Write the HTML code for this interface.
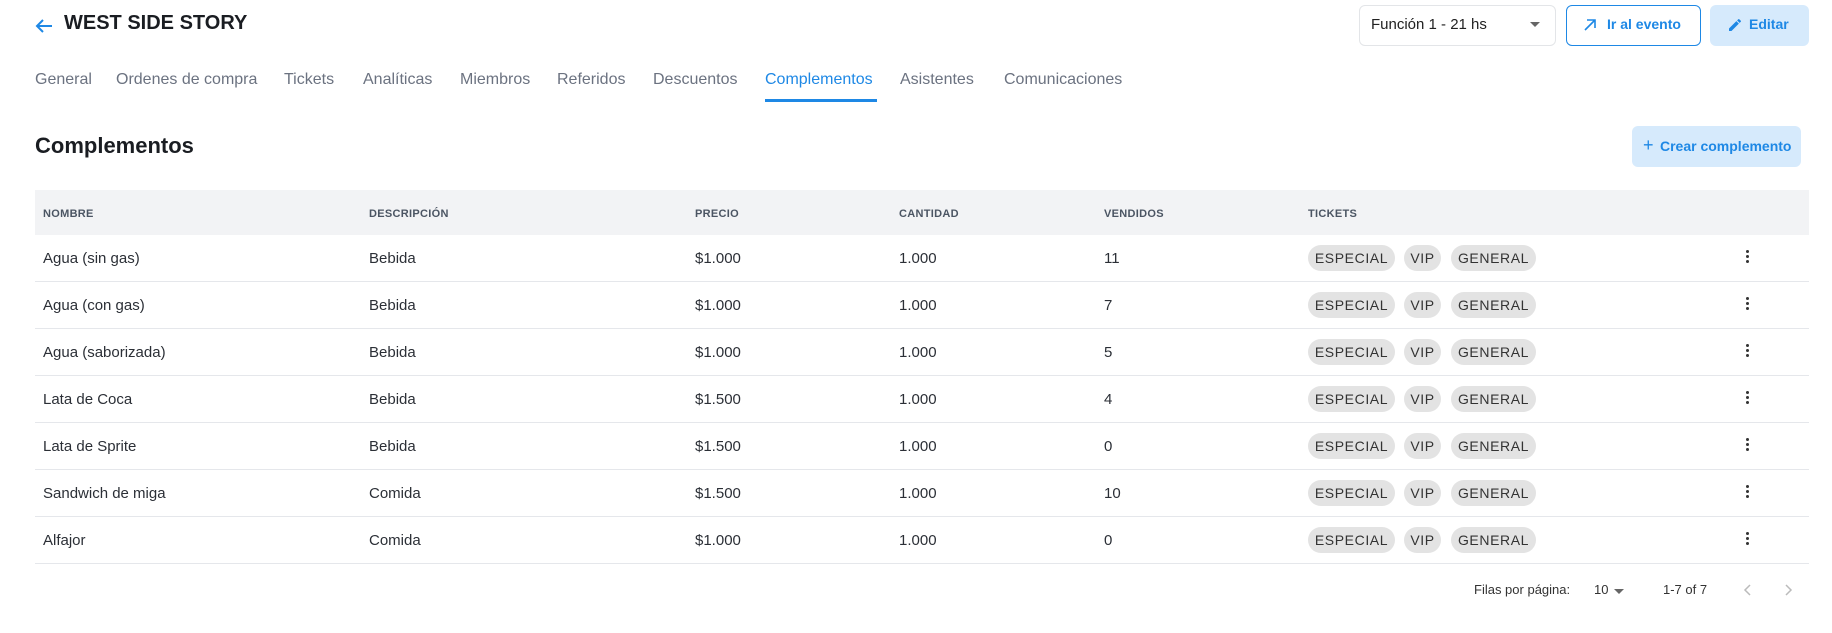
<!DOCTYPE html>
<html><head><meta charset="utf-8"><style>
*{box-sizing:border-box;margin:0;padding:0}
body{width:1832px;height:633px;background:#fff;font-family:"Liberation Sans",sans-serif;color:#1f2329;position:relative;overflow:hidden}
.a{position:absolute;white-space:nowrap}
.tab{position:absolute;top:71px;font-size:16px;color:#6b7280}
.th{position:absolute;top:208px;font-size:11px;font-weight:bold;color:#4b5563;letter-spacing:.3px}
.row{position:absolute;left:35px;width:1774px;height:47px;border-bottom:1px solid #e5e7eb;font-size:15px;color:#2b2f36}
.row span{position:absolute;top:15px}
.chip{position:absolute;top:10px;height:26px;border-radius:13px;background:#e3e3e3;font-size:14px;color:#333;text-align:center;line-height:26px;letter-spacing:.6px}
.dots{position:absolute;left:1711px;top:15px;width:4px}
.dots i{display:block;width:3px;height:3px;border-radius:50%;background:#333;margin-bottom:2px}
</style></head><body>
<svg class="a" style="left:34px;top:16px" width="20" height="20" viewBox="0 0 20 20"><path d="M18 10H3M9 4l-6 6 6 6" fill="none" stroke="#1e88e5" stroke-width="2"/></svg>
<div class="a" style="left:64px;top:12px;font-size:20px;font-weight:bold;color:#1a1d22">WEST SIDE STORY</div>

<div class="a" style="left:1359px;top:5px;width:197px;height:41px;border:1px solid #e3e5e8;border-radius:6px"></div>
<div class="a" style="left:1371px;top:16px;font-size:15px;color:#222">Función 1 - 21 hs</div>
<div class="a" style="left:1530px;top:22px;width:0;height:0;border-left:5px solid transparent;border-right:5px solid transparent;border-top:5px solid #666"></div>

<div class="a" style="left:1566px;top:5px;width:135px;height:41px;border:1.5px solid #1e88e5;border-radius:6px"></div>
<svg class="a" style="left:1583px;top:18px" width="14" height="14" viewBox="0 0 14 14"><path d="M2 12L12 2M4 2h8v8" fill="none" stroke="#1e88e5" stroke-width="1.6"/></svg>
<div class="a" style="left:1607px;top:16px;font-size:14px;font-weight:bold;color:#1e88e5">Ir al evento</div>

<div class="a" style="left:1710px;top:5px;width:99px;height:41px;background:#d6eafc;border-radius:6px"></div>
<svg class="a" style="left:1727px;top:17px" width="16" height="16" viewBox="0 0 24 24"><path d="M3 17.25V21h3.75L17.81 9.94l-3.75-3.75L3 17.25zM20.71 7.04a1 1 0 000-1.41l-2.34-2.34a1 1 0 00-1.41 0l-1.83 1.83 3.75 3.75 1.83-1.83z" fill="#1e88e5"/></svg>
<div class="a" style="left:1749px;top:16px;font-size:14px;font-weight:bold;color:#1e88e5">Editar</div>

<div class="tab" style="left:35px">General</div>
<div class="tab" style="left:116px">Ordenes de compra</div>
<div class="tab" style="left:284px">Tickets</div>
<div class="tab" style="left:363px">Analíticas</div>
<div class="tab" style="left:460px">Miembros</div>
<div class="tab" style="left:557px">Referidos</div>
<div class="tab" style="left:653px">Descuentos</div>
<div class="tab" style="left:765px;color:#1e88e5">Complementos</div>
<div class="a" style="left:765px;top:99px;width:112px;height:3px;background:#1e88e5"></div>
<div class="tab" style="left:900px">Asistentes</div>
<div class="tab" style="left:1004px">Comunicaciones</div>

<div class="a" style="left:35px;top:133px;font-size:22px;font-weight:bold;color:#1a1d22">Complementos</div>
<div class="a" style="left:1632px;top:126px;width:169px;height:41px;background:#d6eafc;border-radius:6px"></div>
<div class="a" style="left:1643px;top:135px;font-size:18px;color:#1e88e5">+</div>
<div class="a" style="left:1660px;top:138px;font-size:14px;font-weight:bold;color:#1e88e5">Crear complemento</div>

<div class="a" style="left:35px;top:190px;width:1774px;height:45px;background:#f2f3f5"></div>
<div class="th" style="left:43px">NOMBRE</div>
<div class="th" style="left:369px">DESCRIPCIÓN</div>
<div class="th" style="left:695px">PRECIO</div>
<div class="th" style="left:899px">CANTIDAD</div>
<div class="th" style="left:1104px">VENDIDOS</div>
<div class="th" style="left:1308px">TICKETS</div>

<div class="row" style="top:235px"><span style="left:8px">Agua (sin gas)</span><span style="left:334px">Bebida</span><span style="left:660px">$1.000</span><span style="left:864px">1.000</span><span style="left:1069px">11</span><div class="chip" style="left:1273px;width:87px">ESPECIAL</div><div class="chip" style="left:1369px;width:37px">VIP</div><div class="chip" style="left:1416px;width:85px">GENERAL</div><div class="dots"><i></i><i></i><i></i></div></div>
<div class="row" style="top:282px"><span style="left:8px">Agua (con gas)</span><span style="left:334px">Bebida</span><span style="left:660px">$1.000</span><span style="left:864px">1.000</span><span style="left:1069px">7</span><div class="chip" style="left:1273px;width:87px">ESPECIAL</div><div class="chip" style="left:1369px;width:37px">VIP</div><div class="chip" style="left:1416px;width:85px">GENERAL</div><div class="dots"><i></i><i></i><i></i></div></div>
<div class="row" style="top:329px"><span style="left:8px">Agua (saborizada)</span><span style="left:334px">Bebida</span><span style="left:660px">$1.000</span><span style="left:864px">1.000</span><span style="left:1069px">5</span><div class="chip" style="left:1273px;width:87px">ESPECIAL</div><div class="chip" style="left:1369px;width:37px">VIP</div><div class="chip" style="left:1416px;width:85px">GENERAL</div><div class="dots"><i></i><i></i><i></i></div></div>
<div class="row" style="top:376px"><span style="left:8px">Lata de Coca</span><span style="left:334px">Bebida</span><span style="left:660px">$1.500</span><span style="left:864px">1.000</span><span style="left:1069px">4</span><div class="chip" style="left:1273px;width:87px">ESPECIAL</div><div class="chip" style="left:1369px;width:37px">VIP</div><div class="chip" style="left:1416px;width:85px">GENERAL</div><div class="dots"><i></i><i></i><i></i></div></div>
<div class="row" style="top:423px"><span style="left:8px">Lata de Sprite</span><span style="left:334px">Bebida</span><span style="left:660px">$1.500</span><span style="left:864px">1.000</span><span style="left:1069px">0</span><div class="chip" style="left:1273px;width:87px">ESPECIAL</div><div class="chip" style="left:1369px;width:37px">VIP</div><div class="chip" style="left:1416px;width:85px">GENERAL</div><div class="dots"><i></i><i></i><i></i></div></div>
<div class="row" style="top:470px"><span style="left:8px">Sandwich de miga</span><span style="left:334px">Comida</span><span style="left:660px">$1.500</span><span style="left:864px">1.000</span><span style="left:1069px">10</span><div class="chip" style="left:1273px;width:87px">ESPECIAL</div><div class="chip" style="left:1369px;width:37px">VIP</div><div class="chip" style="left:1416px;width:85px">GENERAL</div><div class="dots"><i></i><i></i><i></i></div></div>
<div class="row" style="top:517px"><span style="left:8px">Alfajor</span><span style="left:334px">Comida</span><span style="left:660px">$1.000</span><span style="left:864px">1.000</span><span style="left:1069px">0</span><div class="chip" style="left:1273px;width:87px">ESPECIAL</div><div class="chip" style="left:1369px;width:37px">VIP</div><div class="chip" style="left:1416px;width:85px">GENERAL</div><div class="dots"><i></i><i></i><i></i></div></div>

<div class="a" style="left:1474px;top:582px;font-size:13px;color:#333">Filas por página:</div>
<div class="a" style="left:1594px;top:582px;font-size:13px;color:#333">10</div>
<div class="a" style="left:1614px;top:589px;width:0;height:0;border-left:5px solid transparent;border-right:5px solid transparent;border-top:5px solid #666"></div>
<div class="a" style="left:1663px;top:582px;font-size:13px;color:#333">1-7 of 7</div>
<svg class="a" style="left:1741px;top:582px" width="14" height="16" viewBox="0 0 14 16"><path d="M9 3L4 8l5 5" fill="none" stroke="#bbb" stroke-width="1.5"/></svg>
<svg class="a" style="left:1781px;top:582px" width="14" height="16" viewBox="0 0 14 16"><path d="M5 3l5 5-5 5" fill="none" stroke="#bbb" stroke-width="1.5"/></svg>
</body></html>
